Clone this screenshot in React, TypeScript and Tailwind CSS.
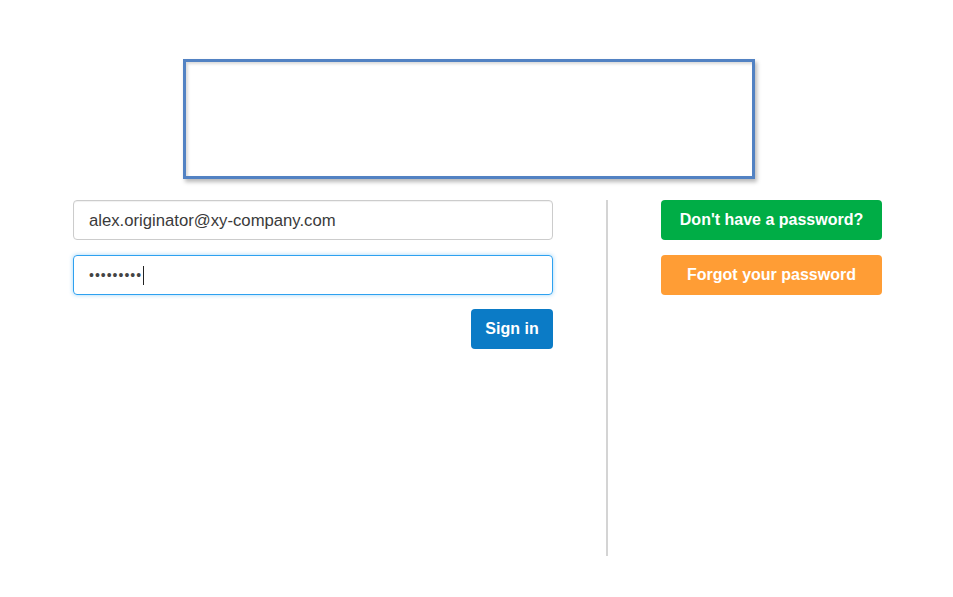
export default function App() {
  return (
    <div className="w-[953px] h-[597px] bg-white font-['Liberation_Sans',Arial,sans-serif] pt-[59px]">
      <div className="ml-[183px] w-[572px] h-[120px] border-[3px] border-[#5282c3] shadow-[2px_3px_4px_rgba(0,0,0,0.28),inset_2px_2px_3px_rgba(0,0,0,0.15)]" />

      <div className="flex mt-[21px] pl-[73px]">
        <div className="w-[480px] flex flex-col">
          <input
            readOnly
            value="alex.originator@xy-company.com"
            className="h-[40px] w-full rounded-[4px] border border-[#cccccc] px-[15px] pt-[1px] text-[16.7px] text-[#3a3a3a] outline-none shadow-[inset_0_1px_1px_rgba(0,0,0,0.06)]"
          />
          <div className="mt-[15px] h-[40px] w-full rounded-[4px] border border-[#2ea1f0] px-[15px] flex items-center shadow-[0_0_4px_rgba(46,161,240,0.45)]">
            <span className="text-[14px] text-[#444] tracking-[1px] leading-none">•••••••••</span>
            <span className="ml-[1px] w-px h-[19px] bg-[#222]" />
          </div>
          <div className="flex justify-end mt-[14px]">
            <button className="h-[40px] w-[82px] rounded-[4px] bg-[#0b7bc6] text-white text-[16px] font-bold">
              Sign in
            </button>
          </div>
        </div>

        <div className="ml-[53px] w-[2px] h-[356px] bg-[#d4d4d4]" />

        <div className="ml-[53px] w-[221px] flex flex-col gap-[15px]">
          <button className="h-[40px] rounded-[4px] bg-[#00ad46] text-white text-[16px] font-bold">
            Don't have a password?
          </button>
          <button className="h-[40px] rounded-[4px] bg-[#ff9d35] text-white text-[16px] font-bold">
            Forgot your password
          </button>
        </div>
      </div>
    </div>
  );
}
